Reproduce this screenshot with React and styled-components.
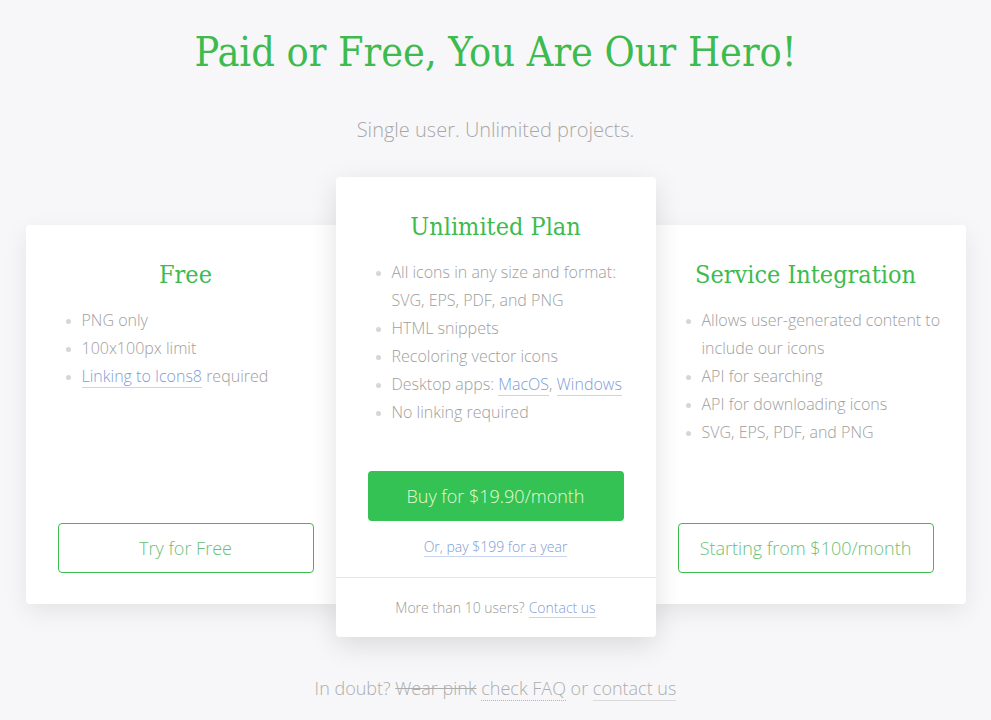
import React from 'react'
import styled, { createGlobalStyle } from 'styled-components'

const GlobalStyle = createGlobalStyle`
  body {
    margin: 0;
    background: #f7f7f9;
    font-family: 'Open Sans', 'Liberation Sans', sans-serif;
    font-weight: 300;
    color: #9e9e9e;
  }
`

const Page = styled.section`
  width: 100%;
  padding-top: 26px;
  display: flex;
  flex-direction: column;
  align-items: center;
`

const Title = styled.h1`
  margin: 0;
  font-family: 'DejaVu Serif Condensed', 'DejaVu Serif', serif;
  font-weight: 400;
  font-size: 41px;
  line-height: 52px;
  color: #3dbb4f;
`

const Subtitle = styled.p`
  margin: 38px 0 0;
  font-size: 20px;
  line-height: 28px;
  color: #a8a8a8;
`

const Plans = styled.div`
  display: flex;
  align-items: flex-start;
  margin-top: 33px;
`

const Card = styled.div`
  position: relative;
  width: 320px;
  box-sizing: border-box;
  background: #fff;
  border-radius: 4px;
  display: flex;
  flex-direction: column;
  margin: ${(p) => (p.$featured ? '0 -10px' : '48px 0 0')};
  height: ${(p) => (p.$featured ? '460px' : '379px')};
  z-index: ${(p) => (p.$featured ? 2 : 1)};
  box-shadow: ${(p) =>
    p.$featured
      ? '0 8px 28px rgba(0, 0, 0, 0.12)'
      : '0 8px 24px rgba(0, 0, 0, 0.08)'};
`

const CardBody = styled.div`
  flex: 1;
  display: flex;
  flex-direction: column;
  padding: 32px 32px ${(p) => (p.$featured ? '20px' : '31px')};
`

const PlanName = styled.h2`
  margin: 0;
  text-align: center;
  font-family: 'DejaVu Serif Condensed', 'DejaVu Serif', serif;
  font-weight: 400;
  font-size: 25px;
  line-height: 36px;
  color: #3dbb4f;
`

const Features = styled.ul`
  margin: 13px -10px 0 0;
  padding: 0 0 0 24px;
  list-style: disc;
  font-size: 16px;
  line-height: 28px;
  color: #9e9e9e;

  li::marker {
    color: #d6d6d6;
    font-size: 13px;
  }
`

const Link = styled.a`
  color: #7f9bd6;
  text-decoration: none;
  border-bottom: 1px solid #c9d5ee;
  cursor: pointer;
`

const OutlineButton = styled.button`
  margin-top: auto;
  height: 50px;
  width: 100%;
  background: #fff;
  border: 1px solid #3dbb4f;
  border-radius: 4px;
  font-family: inherit;
  font-weight: 300;
  font-size: 18px;
  color: #6bbf77;
  cursor: pointer;
`

const BuyButton = styled.button`
  margin-top: 45px;
  height: 50px;
  width: 100%;
  background: #33c253;
  border: none;
  border-radius: 4px;
  font-family: inherit;
  font-weight: 300;
  font-size: 18px;
  color: #e4fbd9;
  cursor: pointer;
`

const YearLink = styled.div`
  margin-top: 16px;
  text-align: center;
  font-size: 14px;
  line-height: 20px;
`

const CardFooter = styled.div`
  height: 60px;
  border-top: 1px solid #e6e6ea;
  display: flex;
  align-items: center;
  justify-content: center;
  font-size: 14px;
  color: #9a9a9a;
  gap: 4px;
`

const Doubt = styled.p`
  margin: 38px 0 0;
  font-size: 18px;
  line-height: 26px;
  color: #adadad;

  s {
    text-decoration-thickness: 1px;
  }
`

const Dotted = styled.span`
  border-bottom: 1px dotted #b5b5b5;
`

const Underlined = styled.span`
  border-bottom: 1px solid #dadada;
`

const App = () => {
  return (
    <>
      <GlobalStyle />
      <Page>
        <Title>Paid or Free, You Are Our Hero!</Title>
        <Subtitle>Single user. Unlimited projects.</Subtitle>

        <Plans>
          <Card>
            <CardBody>
              <PlanName>Free</PlanName>
              <Features>
                <li>PNG only</li>
                <li>100x100px limit</li>
                <li><Link>Linking to Icons8</Link> required</li>
              </Features>
              <OutlineButton>Try for Free</OutlineButton>
            </CardBody>
          </Card>

          <Card $featured>
            <CardBody $featured>
              <PlanName>Unlimited Plan</PlanName>
              <Features>
                <li>All icons in any size and format: SVG, EPS, PDF, and PNG</li>
                <li>HTML snippets</li>
                <li>Recoloring vector icons</li>
                <li>Desktop apps: <Link>MacOS</Link>, <Link>Windows</Link></li>
                <li>No linking required</li>
              </Features>
              <BuyButton>Buy for $19.90/month</BuyButton>
              <YearLink><Link>Or, pay $199 for a year</Link></YearLink>
            </CardBody>
            <CardFooter>
              More than 10 users? <Link>Contact us</Link>
            </CardFooter>
          </Card>

          <Card>
            <CardBody>
              <PlanName>Service Integration</PlanName>
              <Features>
                <li>Allows user-generated content to include our icons</li>
                <li>API for searching</li>
                <li>API for downloading icons</li>
                <li>SVG, EPS, PDF, and PNG</li>
              </Features>
              <OutlineButton>Starting from $100/month</OutlineButton>
            </CardBody>
          </Card>
        </Plans>

        <Doubt>
          In doubt? <s>Wear pink</s> <Dotted>check FAQ</Dotted> or <Underlined>contact us</Underlined>
        </Doubt>
      </Page>
    </>
  )
}

export default App
